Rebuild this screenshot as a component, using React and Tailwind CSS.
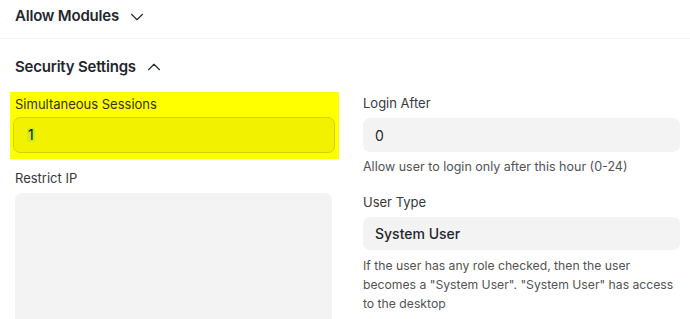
import { ChevronDown, ChevronUp } from 'lucide-react';

export default function App() {
  return (
    <div className="w-[690px] h-[319px] overflow-hidden bg-white text-[#1f272e]" style={{ fontFamily: 'Inter, "Noto Sans", sans-serif' }}>
      {/* Allow Modules (collapsed) */}
      <div className="h-[39px] pl-[15px] flex items-start border-b border-[#f3f4f5]">
        <div className="mt-[3px] flex items-center gap-[7px]">
          <span className="text-[15px] leading-[20px] font-semibold tracking-[-0.2px]">Allow Modules</span>
          <ChevronDown size={22} strokeWidth={1.2} className="mt-[3px]" />
        </div>
      </div>

      {/* Security Settings */}
      <div className="pl-[15px] pt-[17px] flex items-center gap-[7px]">
        <span className="text-[15px] leading-[20px] font-semibold tracking-[-0.2px]">Security Settings</span>
        <ChevronUp size={22} strokeWidth={1.2} />
      </div>

      <div className="mt-[14px] flex gap-x-[24px]">
        {/* left column */}
        <div className="w-[339px] pl-[10px]">
          <div className="bg-[#ffff00] pl-[3px] pr-[4px] pt-[3px] pb-[6px]">
            <div className="pl-[2px] text-[13px] text-[#333300] leading-[18px]">Simultaneous Sessions</div>
            <div className="mt-[4px] h-[36px] rounded-[7px] border border-[#d2d200] bg-[#f1f100] flex items-center pl-[13px] text-[14px] text-[#111]">
              <span className="inline-block bg-[#d2ec16] px-[1px] leading-[14px]">1</span>
            </div>
          </div>
          <div className="pl-[5px] pr-[7px]">
            <div className="mt-[10px] text-[13px] text-[#383838] leading-[18px]">Restrict IP</div>
            <div className="mt-[6px] h-[140px] rounded-[7px] bg-[#f3f3f3]" />
          </div>
        </div>

        {/* right column */}
        <div className="w-[317px] pt-[2px]">
          <div className="text-[13px] text-[#383838] leading-[18px]">Login After</div>
          <div className="mt-[6px] h-[34px] rounded-[7px] bg-[#f3f3f3] flex items-center pl-[12px] text-[14px]">0</div>
          <div className="mt-[5px] text-[12.5px] text-[#525252] leading-[19px]">Allow user to login only after this hour (0-24)</div>

          <div className="mt-[17px] text-[13px] text-[#383838] leading-[18px]">User Type</div>
          <div className="mt-[6px] h-[33px] rounded-[7px] bg-[#f3f3f3] flex items-center pl-[12px] text-[14px] font-medium">System User</div>
          <div className="mt-[6px] text-[12.2px] text-[#525252] leading-[19px]">
            If the user has any role checked, then the user becomes a "System User". "System User" has access to the desktop
          </div>
        </div>
      </div>
    </div>
  );
}
